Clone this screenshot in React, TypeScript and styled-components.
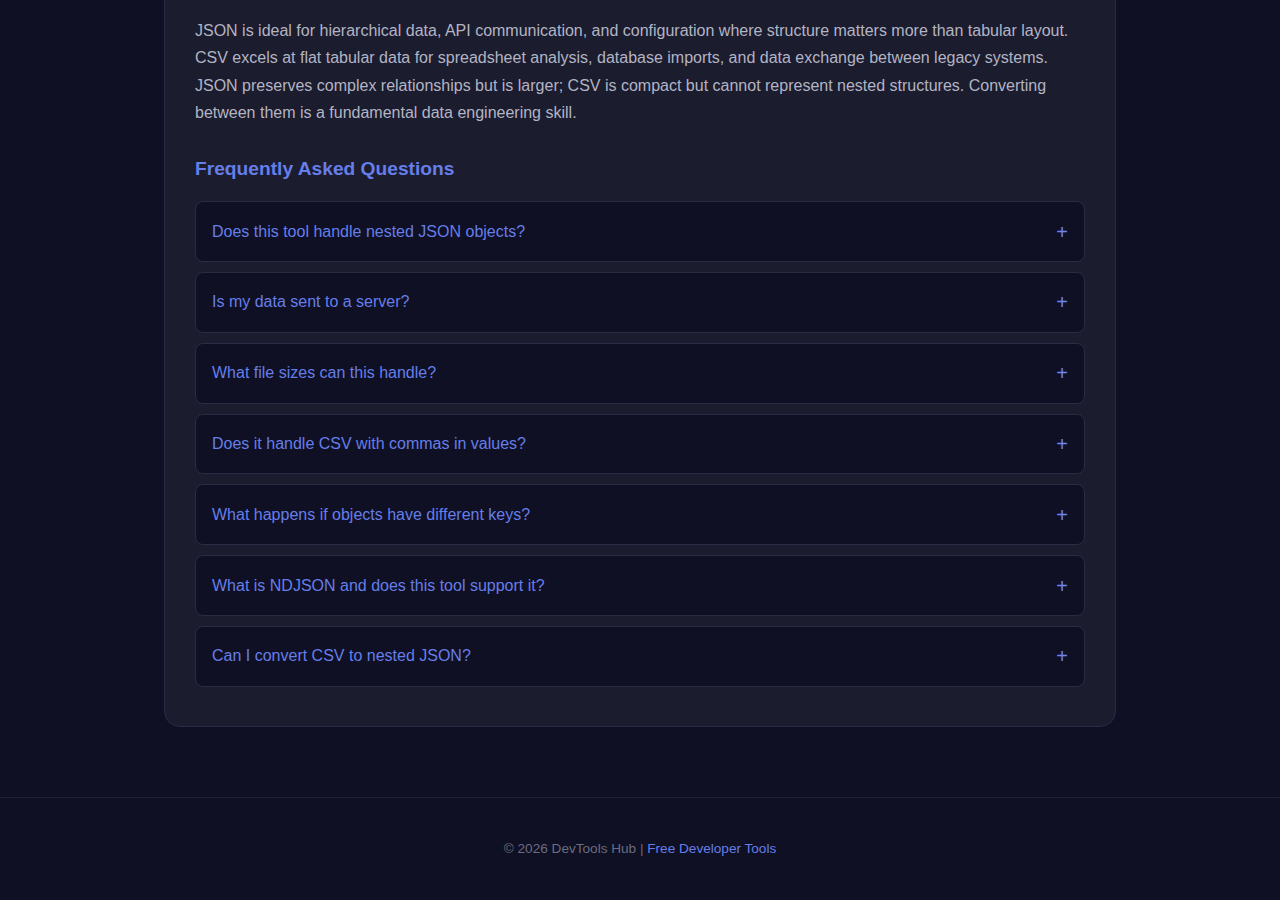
import React from "react";
import styled, { createGlobalStyle } from "styled-components";

const Global = createGlobalStyle`
  html, body { margin: 0; padding: 0; background: #0f1023; }
  body { font-family: "Liberation Sans", Arial, sans-serif; overflow: hidden; }
  * { box-sizing: border-box; }
`;

const Page = styled.div`
  min-height: 900px;
  display: flex;
  flex-direction: column;
  background: #0f1023;
`;

const Main = styled.main`
  width: 952px;
  margin: 0 auto;
  padding-bottom: 70px;
`;

const Card = styled.section`
  margin-top: -30px;
  background: #1b1c2e;
  border: 1px solid #2a2b45;
  border-radius: 16px;
  padding: 46px 30px 30px;
`;

const Paragraph = styled.p`
  margin: 0;
  color: #b3b4c4;
  font-size: 16px;
  line-height: 27.3px;
`;

const Heading = styled.h2`
  margin: 31px 0 21px;
  color: #667eea;
  font-size: 19.2px;
  font-weight: 700;
  line-height: 23px;
`;

const List = styled.div`
  display: flex;
  flex-direction: column;
  gap: 10px;
  margin-bottom: 9px;
`;

const Item = styled.div`
  background: #0f1023;
  border: 1px solid #2a2b45;
  border-radius: 8px;
`;

const Question = styled.button`
  width: 100%;
  display: flex;
  align-items: center;
  justify-content: space-between;
  background: transparent;
  border: none;
  padding: 0 16px;
  height: 58.8px;
  color: #667eea;
  font-family: "Liberation Sans", Arial, sans-serif;
  font-size: 16px;
  text-align: left;
  cursor: pointer;
`;

const Plus = styled.span`
  color: #6d84f5;
  font-size: 20px;
  line-height: 1;
  font-weight: 400;
`;

const Footer = styled.footer`
  border-top: 1px solid #1e1f35;
  padding: 42px 20px 40px;
  text-align: center;
  color: #6b6c80;
  font-size: 13.6px;
  line-height: 18px;
`;

const FooterLink = styled.a`
  color: #667eea;
  text-decoration: none;
`;

const questions = [
  "Does this tool handle nested JSON objects?",
  "Is my data sent to a server?",
  "What file sizes can this handle?",
  "Does it handle CSV with commas in values?",
  "What happens if objects have different keys?",
  "What is NDJSON and does this tool support it?",
  "Can I convert CSV to nested JSON?",
];

export default function App() {
  return (
    <Page>
      <Global />
      <Main>
        <Card>
          <Paragraph>
            JSON is ideal for hierarchical data, API communication, and configuration where structure matters more than tabular layout.
            CSV excels at flat tabular data for spreadsheet analysis, database imports, and data exchange between legacy systems.
            JSON preserves complex relationships but is larger; CSV is compact but cannot represent nested structures. Converting
            between them is a fundamental data engineering skill.
          </Paragraph>
          <Heading>Frequently Asked Questions</Heading>
          <List>
            {questions.map((q) => (
              <Item key={q}>
                <Question>
                  <span>{q}</span>
                  <Plus>+</Plus>
                </Question>
              </Item>
            ))}
          </List>
        </Card>
      </Main>
      <Footer>
        © 2026 DevTools Hub | <FooterLink href="#">Free Developer Tools</FooterLink>
      </Footer>
    </Page>
  );
}
